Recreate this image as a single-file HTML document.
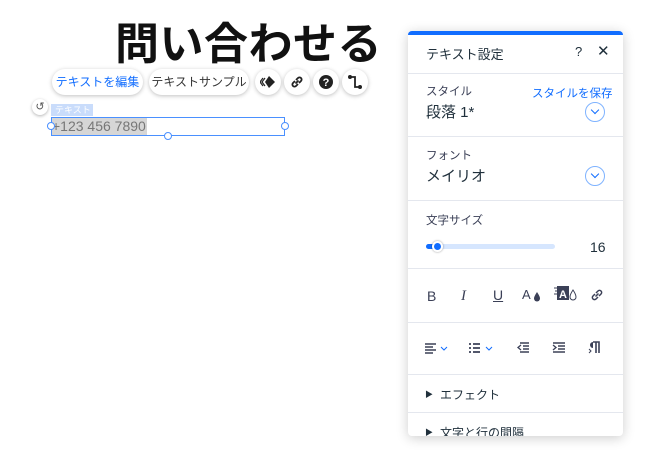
<!DOCTYPE html>
<html><head><meta charset="utf-8"><style>
*{margin:0;padding:0;box-sizing:border-box}
body{width:660px;height:452px;background:#fff;position:relative;overflow:hidden;font-family:"Liberation Sans","Noto Sans CJK JP",sans-serif;color:#20303c}
.a{position:absolute}
.title{left:115px;top:8px;font-size:44px;font-weight:bold;color:#111;letter-spacing:0.5px;white-space:nowrap}
.pill{position:absolute;top:69px;height:26px;border-radius:13px;background:#fff;box-shadow:0 1px 4px rgba(0,0,0,.25);font-size:12px;line-height:26px;text-align:center}
.circ{position:absolute;top:69px;width:26px;height:26px;border-radius:13px;background:#fff;box-shadow:0 1px 4px rgba(0,0,0,.25)}
.circ svg{position:absolute;left:5px;top:5px}
.panel{left:408px;top:31px;width:215px;height:405px;background:#fff;box-shadow:0 2px 12px rgba(0,0,0,.2);border-top:4px solid #116dff;border-radius:4px;overflow:hidden}
.sep{position:absolute;left:0;width:215px;height:1px;background:#e4e7ee}
.lbl{position:absolute;font-size:11.5px;color:#3b4057}
.val{position:absolute;font-size:15px;color:#20303c}
.dd{position:absolute;width:20px;height:20px;border:1.5px solid #7fb3ff;border-radius:10px}
.dd:after{content:"";position:absolute;left:5.5px;top:4px;width:5px;height:5px;border-right:1.5px solid #116dff;border-bottom:1.5px solid #116dff;transform:rotate(45deg)}
</style></head><body>
<div class="a title">問い合わせる</div>
<div class="pill" style="left:52px;width:91px;color:#116dff">テキストを編集</div>
<div class="pill" style="left:149px;width:100px;color:#333">テキストサンプル</div>
<div class="circ" style="left:255px"><svg width="16" height="16" viewBox="0 0 16 16"><path d="M9 2l6 6-6 6-4-6z" fill="#222"/><path d="M5 4l-3 4 3 4M3 4L0 8l3 4" stroke="#222" fill="none" stroke-width="1.2"/></svg></div>
<div class="circ" style="left:284px"><svg width="16" height="16" viewBox="0 0 16 16"><path d="M6.5 9.5l3-3M6 7L4 9a2 2 0 0 0 3 3l2-2M10 9l2-2a2 2 0 0 0-3-3L7 6" stroke="#222" fill="none" stroke-width="1.8"/></svg></div>
<div class="circ" style="left:313px"><svg width="16" height="16" viewBox="0 0 16 16"><circle cx="8" cy="8" r="7" fill="#222"/><text x="8" y="12" font-size="11" font-weight="bold" fill="#fff" text-anchor="middle" font-family="Liberation Sans">?</text></svg></div>
<div class="circ" style="left:342px"><svg width="16" height="16" viewBox="0 0 16 16"><path d="M3 3h5v10h5" stroke="#222" fill="none" stroke-width="1.8"/><circle cx="3" cy="3" r="2" fill="#222"/><circle cx="13" cy="13" r="2" fill="#222"/></svg></div>
<div class="a" style="left:32px;top:99px;width:16px;height:16px;border-radius:8px;background:#fff;box-shadow:0 1px 3px rgba(0,0,0,.3);font-size:11px;line-height:16px;text-align:center;color:#555">↺</div>
<div class="a" style="left:51px;top:104px;width:42px;height:12px;background:#c9dcfb;color:#fff;font-size:9px;line-height:12px;padding-left:4px">テキスト</div>
<div class="a" style="left:51px;top:117px;width:234px;height:19px;border:1px solid #4a90ff"></div>
<div class="a" style="left:52px;top:118px;width:95px;height:17px;background:#d6d6d6"></div>
<div class="a" style="left:52px;top:117px;font-size:14px;color:#777;line-height:19px">+123 456 7890</div>
<div class="a" style="left:47px;top:122px;width:8px;height:8px;border-radius:4px;border:1px solid #4a90ff;background:#fff"></div>
<div class="a" style="left:281px;top:122px;width:8px;height:8px;border-radius:4px;border:1px solid #4a90ff;background:#fff"></div>
<div class="a" style="left:164px;top:132px;width:8px;height:8px;border-radius:4px;border:1px solid #4a90ff;background:#fff"></div>

<div class="a panel">
 <div class="lbl" style="left:18px;top:9px;font-size:13px;color:#20303c">テキスト設定</div>
 <div class="lbl" style="left:167px;top:9px;font-size:13px;color:#20303c">?</div>
 <div class="lbl" style="left:189px;top:7px;font-size:15px;color:#20303c">✕</div>
 <div class="sep" style="top:38px"></div>
 <div class="lbl" style="left:18px;top:48px">スタイル</div>
 <div class="lbl" style="left:124px;top:50px;color:#116dff;font-size:11.5px">スタイルを保存</div>
 <div class="val" style="left:18px;top:66px">段落 1*</div>
 <div class="dd" style="left:177px;top:67px"></div>
 <div class="sep" style="top:101px"></div>
 <div class="lbl" style="left:18px;top:112px">フォント</div>
 <div class="val" style="left:18px;top:130px">メイリオ</div>
 <div class="dd" style="left:177px;top:131px"></div>
 <div class="sep" style="top:165px"></div>
 <div class="lbl" style="left:18px;top:177px">文字サイズ</div>
 <div class="a" style="left:18px;top:209px;width:129px;height:5px;border-radius:3px;background:#d6e6fe"></div>
 <div class="a" style="left:18px;top:209px;width:12px;height:5px;border-radius:3px;background:#116dff"></div>
 <div class="a" style="left:24px;top:206px;width:11px;height:11px;border-radius:6px;background:#116dff;border:2px solid #fff;box-shadow:0 0 2px rgba(0,0,0,.4)"></div>
 <div class="val" style="left:182px;top:204px;font-size:14px">16</div>
 <div class="sep" style="top:233px"></div>
 <div class="a" style="left:19px;top:253px;font-size:14px;color:#3b4057">B</div>
 <div class="a" style="left:53px;top:253px;font-size:15px;font-family:'Liberation Serif';font-style:italic;color:#3b4057">I</div>
 <div class="a" style="left:85px;top:252px;font-size:14px;text-decoration:underline;color:#3b4057">U</div>
 <svg class="a" style="left:114px;top:252px" width="20" height="16" viewBox="0 0 20 16"><text x="0" y="12" font-size="13" fill="#3b4057" font-family="Liberation Sans">A</text><path d="M15 5c-2 3-3 5-3 6.5a3 3 0 0 0 6 0c0-1.5-1-3.5-3-6.5z" fill="#3b4057"/></svg>
 <svg class="a" style="left:146px;top:250px" width="24" height="18" viewBox="0 0 24 18"><rect x="3" y="1" width="12" height="14" fill="#3b4057"/><path d="M0 3h3M1 6h2M0 9h3" stroke="#3b4057"/><text x="5" y="13" font-size="11" font-weight="bold" fill="#fff" font-family="Liberation Sans">A</text><path d="M19 5c-2 3-3 5-3 7a3 3 0 0 0 6 0c0-2-1-4-3-7z" fill="#fff" stroke="#3b4057"/></svg>
 <svg class="a" style="left:181px;top:252px" width="16" height="16" viewBox="0 0 16 16"><path d="M6.5 9.5l3-3M6 7L4 9a2 2 0 0 0 3 3l2-2M10 9l2-2a2 2 0 0 0-3-3L7 6" stroke="#3b4057" fill="none" stroke-width="1.5"/></svg>
 <div class="sep" style="top:287px"></div>
 <svg class="a" style="left:16px;top:308px" width="30" height="12" viewBox="0 0 30 12"><path d="M1 1h11M1 4h8M1 7h11M1 10h8" stroke="#3b4057" stroke-width="1.6"/><path d="M17 4l3 3 3-3" stroke="#116dff" fill="none"/></svg>
 <svg class="a" style="left:60px;top:308px" width="30" height="12" viewBox="0 0 30 12"><path d="M1 1h2M5 1h7M1 5h2M5 5h7M1 9h2M5 9h7" stroke="#3b4057" stroke-width="1.8"/><path d="M18 4l3 3 3-3" stroke="#116dff" fill="none"/></svg>
 <svg class="a" style="left:108px;top:307px" width="14" height="12" viewBox="0 0 14 12"><path d="M4 1h9M7 4h6M7 7h6M4 10h9" stroke="#3b4057" stroke-width="1.6"/><path d="M5 3L2 5.5 5 8" stroke="#3b4057" fill="none" stroke-width="1.3"/></svg>
 <svg class="a" style="left:144px;top:307px" width="14" height="12" viewBox="0 0 14 12"><path d="M1 1h12M6 4h7M6 7h7M1 10h12" stroke="#3b4057" stroke-width="1.6"/><path d="M1 3l3 2.5L1 8" stroke="#3b4057" fill="none" stroke-width="1.3"/></svg>
 <svg class="a" style="left:180px;top:306px" width="12" height="13" viewBox="0 0 12 13"><path d="M5 1h6v11M8 1v11" stroke="#3b4057" stroke-width="1.6" fill="none"/><path d="M5 1a3 3 0 0 0 0 6z" fill="#3b4057"/><path d="M1 8l2 2-2 2" stroke="#3b4057" fill="none"/></svg>
 <div class="sep" style="top:339px"></div>
 <div class="a" style="left:17px;top:354px;font-size:8px;color:#20303c">▶</div>
 <div class="lbl" style="left:32px;top:351px;font-size:12px;color:#20303c">エフェクト</div>
 <div class="sep" style="top:377px"></div>
 <div class="a" style="left:17px;top:392px;font-size:8px;color:#20303c">▶</div>
 <div class="lbl" style="left:32px;top:389px;font-size:12px;color:#20303c">文字と行の間隔</div>
</div>
</body></html>
